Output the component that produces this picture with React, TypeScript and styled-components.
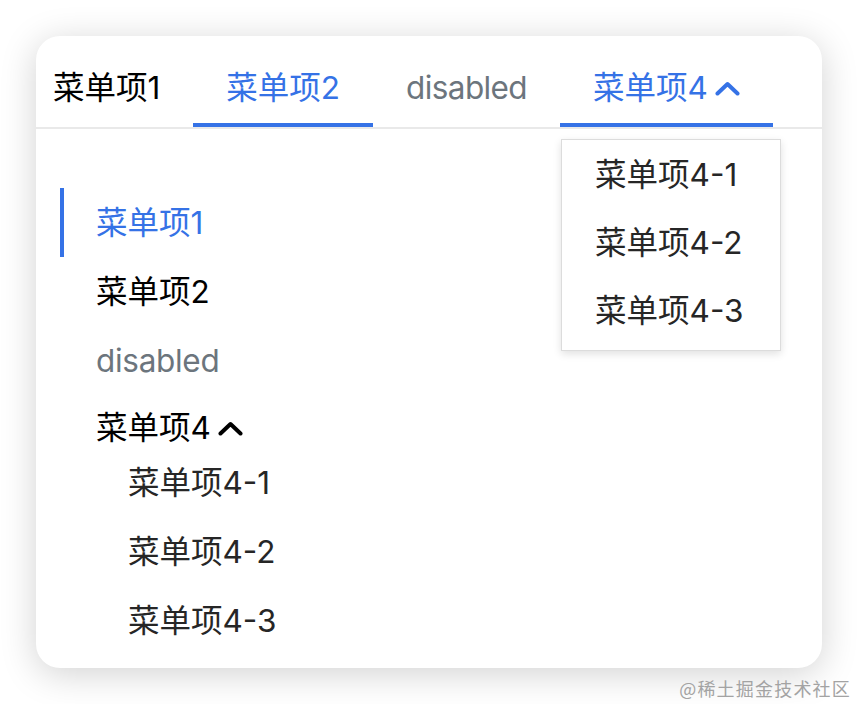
import React from "react";
import styled, { createGlobalStyle } from "styled-components";

const BLUE = "#3572e6";
const FS = "31.5px";

const GlobalStyle = createGlobalStyle`
  html, body {
    margin: 0;
    padding: 0;
    background: #ffffff;
  }
  body {
    font-family: Inter, "Noto Sans CJK SC", sans-serif;
    -webkit-font-smoothing: antialiased;
  }
  * { box-sizing: border-box; }
`;

const Page = styled.div`
  position: relative;
  width: 858px;
  height: 704px;
  padding: 36px;
  overflow: hidden;
`;

const Card = styled.div`
  width: 786px;
  height: 632px;
  background: #fff;
  border-radius: 24px;
  box-shadow: 0 6px 36px rgba(0, 0, 0, 0.18);
`;

const HMenu = styled.ul`
  display: flex;
  margin: 0;
  padding: 0 0 0 17px;
  list-style: none;
  border-bottom: 2px solid #e9e9e9;
`;

type Tone = "normal" | "active" | "disabled";

const toneColor = (t: Tone) =>
  t === "active" ? BLUE : t === "disabled" ? "#6c757d" : "#000";

const Tab = styled.li<{ $tone: Tone; $underline?: boolean }>`
  position: relative;
  display: flex;
  align-items: center;
  height: 91px;
  padding: 17px 33px 0;
  font-size: ${FS};
  line-height: 40px;
  letter-spacing: ${(p) => (p.$tone === "disabled" ? "-0.6px" : "0")};
  color: ${(p) => toneColor(p.$tone)};
  border-bottom: 4px solid ${(p) => (p.$underline ? BLUE : "transparent")};
  white-space: nowrap;
  &:first-child {
    padding-left: 0;
  }
`;

const Chevron = styled.svg<{ $color: string }>`
  display: block;
  margin-left: 7px;
  color: ${(p) => p.$color};
`;

const ChevronUp = ({ color }: { color: string }) => (
  <Chevron $color={color} width="25" height="15" viewBox="0 0 25 15">
    <polyline
      points="2.5,12.5 12.5,3 22.5,12.5"
      fill="none"
      stroke="currentColor"
      strokeWidth="4"
      strokeLinecap="round"
      strokeLinejoin="round"
    />
  </Chevron>
);

const Dropdown = styled.ul`
  position: absolute;
  top: calc(100% + 16px);
  left: 1px;
  width: 220px;
  margin: 0;
  padding: 1px 0 5px;
  list-style: none;
  background: #fff;
  border: 1px solid #dcdcdc;
  box-shadow: 0 3px 8px rgba(0, 0, 0, 0.12);
  letter-spacing: 0;
  z-index: 2;
`;

const DropItem = styled.li`
  height: 68px;
  display: flex;
  align-items: center;
  padding-left: 33px;
  font-size: ${FS};
  line-height: 40px;
  color: #262626;
`;

const VMenu = styled.ul`
  margin: 0;
  padding: 59px 0 0 24px;
  list-style: none;
`;

const VItem = styled.li<{ $tone: Tone }>`
  display: flex;
  align-items: center;
  height: 69px;
  padding-left: 32px;
  font-size: ${FS};
  line-height: 40px;
  letter-spacing: ${(p) => (p.$tone === "disabled" ? "-0.3px" : "0")};
  color: ${(p) => toneColor(p.$tone)};
  border-left: 4px solid ${(p) => (p.$tone === "active" ? BLUE : "transparent")};
`;

const SubBlock = styled.li`
  display: flex;
  flex-direction: column;
`;

const SubTitle = styled.div`
  display: flex;
  align-items: flex-start;
  height: 53px;
  padding: 13px 0 0 36px;
  font-size: ${FS};
  line-height: 40px;
  color: #000;
  & > svg {
    margin-top: 13px;
  }
`;

const SubList = styled.ul`
  margin: 0;
  padding: 0;
  list-style: none;
`;

const SubItem = styled.li`
  display: flex;
  align-items: center;
  height: 69px;
  padding-left: 68px;
  font-size: ${FS};
  line-height: 40px;
  color: #262626;
`;

const Watermark = styled.div`
  position: absolute;
  right: 7px;
  top: 675px;
  font-family: "Noto Sans CJK SC", sans-serif;
  font-size: 18px;
  line-height: 26px;
  letter-spacing: 1.2px;
  color: #a3a3a3;
`;

const subs = ["菜单项4-1", "菜单项4-2", "菜单项4-3"];

export default function App() {
  return (
    <>
      <GlobalStyle />
      <Page>
        <Card>
          <HMenu>
            <Tab $tone="normal">菜单项1</Tab>
            <Tab $tone="active" $underline>
              菜单项2
            </Tab>
            <Tab $tone="disabled">disabled</Tab>
            <Tab $tone="active" $underline>
              菜单项4
              <ChevronUp color={BLUE} />
              <Dropdown>
                {subs.map((s) => (
                  <DropItem key={s}>{s}</DropItem>
                ))}
              </Dropdown>
            </Tab>
          </HMenu>
          <VMenu>
            <VItem $tone="active">菜单项1</VItem>
            <VItem $tone="normal">菜单项2</VItem>
            <VItem $tone="disabled">disabled</VItem>
            <SubBlock>
              <SubTitle>
                菜单项4
                <ChevronUp color="#000" />
              </SubTitle>
              <SubList>
                {subs.map((s) => (
                  <SubItem key={s}>{s}</SubItem>
                ))}
              </SubList>
            </SubBlock>
          </VMenu>
        </Card>
        <Watermark>@稀土掘金技术社区</Watermark>
      </Page>
    </>
  );
}
